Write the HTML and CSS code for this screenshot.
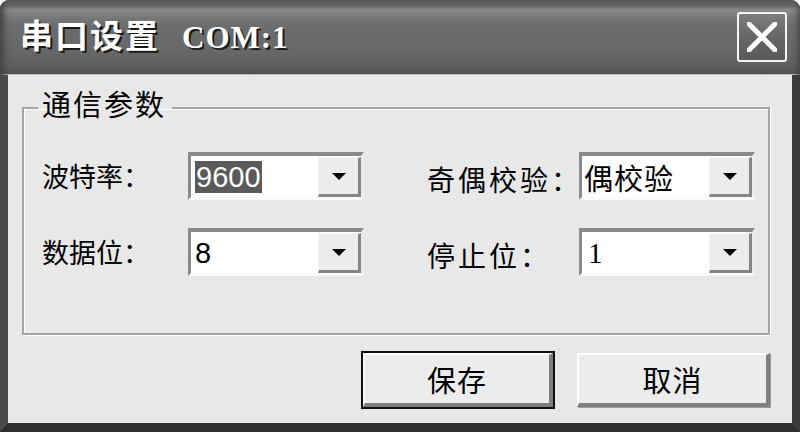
FILE: index.html
```html
<!DOCTYPE html>
<html lang="zh-CN">
<head>
<meta charset="utf-8">
<title>串口设置</title>
<link rel="stylesheet" href="styles.css">
</head>
<body>
<div class="window">
  <div class="titlebar">
    <span class="title">串口设置<span class="latin">COM:1</span></span>
    <button class="close" aria-label="关闭">
      <svg width="30" height="30" viewBox="0 0 30 30"><path d="M2 2 L28 28 M28 2 L2 28" stroke="#fff" stroke-width="5" stroke-linecap="square"/></svg>
    </button>
  </div>
  <div class="client">
    <fieldset class="group">
      <legend class="legend">通信参数</legend>
      <div class="grid">
        <span class="label">波特率：</span>
        <div class="combo"><span class="value"><span class="sel">9600</span></span><span class="drop"><i class="arrow"></i></span></div>
        <span class="label wide">奇偶校验：</span>
        <div class="combo"><span class="value cjk">偶校验</span><span class="drop"><i class="arrow"></i></span></div>
        <span class="label">数据位：</span>
        <div class="combo"><span class="value">8</span><span class="drop"><i class="arrow"></i></span></div>
        <span class="label wide">停止位：</span>
        <div class="combo"><span class="value serif">1</span><span class="drop"><i class="arrow"></i></span></div>
      </div>
    </fieldset>
    <div class="buttons">
      <button class="btn default">保存</button>
      <button class="btn">取消</button>
    </div>
  </div>
</div>
</body>
</html>
```
FILE: styles.css
```css
* { box-sizing: border-box; }
html, body { margin: 0; padding: 0; background: #ffffff; }
body { font-family: "Noto Sans CJK SC", "Liberation Sans", sans-serif; color: #000; }

.window {
  width: 800px;
  height: 432px;
  display: flex;
  flex-direction: column;
  border-radius: 9px 9px 0 0;
  overflow: hidden;
  background: #3c3c3c;
}

.titlebar {
  height: 75px;
  flex: 0 0 75px;
  display: flex;
  align-items: center;
  justify-content: space-between;
  padding: 0 13px 0 20px;
  background: linear-gradient(to bottom, #5e5e5e 0px, #666 6px, #8a8a8a 10px, #7a7a7a 16px, #6c6c6c 26px, #686868 50px, #5e5e5e 66px, #545454 74px, #d8d8d8 74px);
  box-shadow: inset 8px 0 6px -4px #444, inset -6px 0 6px -4px #444;
}

.title {
  color: #fff;
  font-size: 33px;
  font-weight: 700;
  line-height: 40px;
  letter-spacing: 2px;
  text-shadow: 2px 2px 0 #1a1a1a;
  margin-top: -4px;
}
.latin {
  font-family: "Liberation Serif", serif;
  font-size: 31px;
  font-weight: 700;
  letter-spacing: 1px;
  margin-left: 22px;
}

.close {
  width: 50px;
  height: 50px;
  padding: 0;
  margin-top: -2px;
  border: 2px solid #f4f4f4;
  border-radius: 3px;
  background: linear-gradient(to bottom, #7e7e7e, #666 50%, #5a5a5a);
  display: flex;
  align-items: center;
  justify-content: center;
}

.client {
  flex: 1;
  background: #e8e8e8;
  border-left: 8px solid #4a4a4a;
  border-right: 8px solid #3a3a3a;
  border-bottom: 9px solid #2f2f2f;
  padding: 13px 22px 16px 14px;
  display: flex;
  flex-direction: column;
}

.group {
  margin: 0;
  padding: 24px 15px 57px 18px;
  border: 2px solid #a4a4a4;
  box-shadow: 1px 1px 0 #fff, inset 1px 1px 0 #fff;
  min-width: 0;
}
.legend {
  font-size: 29px;
  line-height: 30px;
  padding: 0 6px 10px 4px;
  margin-left: -4px;
  letter-spacing: 2px;
}

.grid {
  display: grid;
  grid-template-columns: 146px 176px 63px 152px 176px;
  grid-template-rows: 48px 48px;
  row-gap: 28px;
  align-items: center;
}
.label {
  font-size: 27px;
  line-height: 30px;
  white-space: nowrap;
}
.label.wide {
  grid-column: 4;
  letter-spacing: 3px;
  font-size: 28px;
  margin-top: 6px;
}

.combo {
  height: 48px;
  display: flex;
  align-items: center;
  background: #fff;
  border-style: solid;
  border-width: 4px 3px 3px 3px;
  border-color: #8a8a8a #ececec #fafafa #8a8a8a;
  padding: 1px 0 0 4px;
}
.value {
  flex: 1;
  font-family: "Liberation Sans", sans-serif;
  font-size: 29px;
  line-height: 32px;
}
.value.cjk {
  font-family: "Noto Sans CJK SC", sans-serif;
  font-size: 29px;
  letter-spacing: 1px;
  margin-left: -2px;
}
.value.serif { font-family: "Liberation Serif", serif; padding-left: 2px; }
.sel {
  background: #5a5a5a;
  color: #fff;
  padding: 0 1px;
}

.drop {
  width: 43px;
  height: 40px;
  flex: 0 0 43px;
  align-self: flex-end;
  background: #ececec;
  border-style: solid;
  border-width: 1px 3px 3px 1px;
  border-color: #f8f8f8 #858585 #858585 #f8f8f8;
  display: flex;
  align-items: center;
  justify-content: center;
}
.arrow {
  width: 0;
  height: 0;
  border-left: 7px solid transparent;
  border-right: 7px solid transparent;
  border-top: 7px solid #000;
}

.buttons {
  margin-top: auto;
  display: flex;
  justify-content: flex-end;
  gap: 22px;
}
.btn {
  width: 193px;
  height: 54px;
  font-family: "Noto Sans CJK SC", sans-serif;
  font-size: 29px;
  line-height: 30px;
  color: #000;
  background: #ececec;
  border-style: solid;
  border-width: 2px 4px 4px 2px;
  border-color: #ffffff #808080 #808080 #ffffff;
  box-shadow: 1px 1px 0 #9a9a9a;
  padding: 0;
  letter-spacing: 1px;
}
.btn.default {
  border-width: 2px 4px 4px 2px;
  border-color: #fafafa #7e7e7e #7e7e7e #fafafa;
  box-shadow: 0 0 0 2px #111;
  width: 190px;
  margin-right: 2px;
}
```
